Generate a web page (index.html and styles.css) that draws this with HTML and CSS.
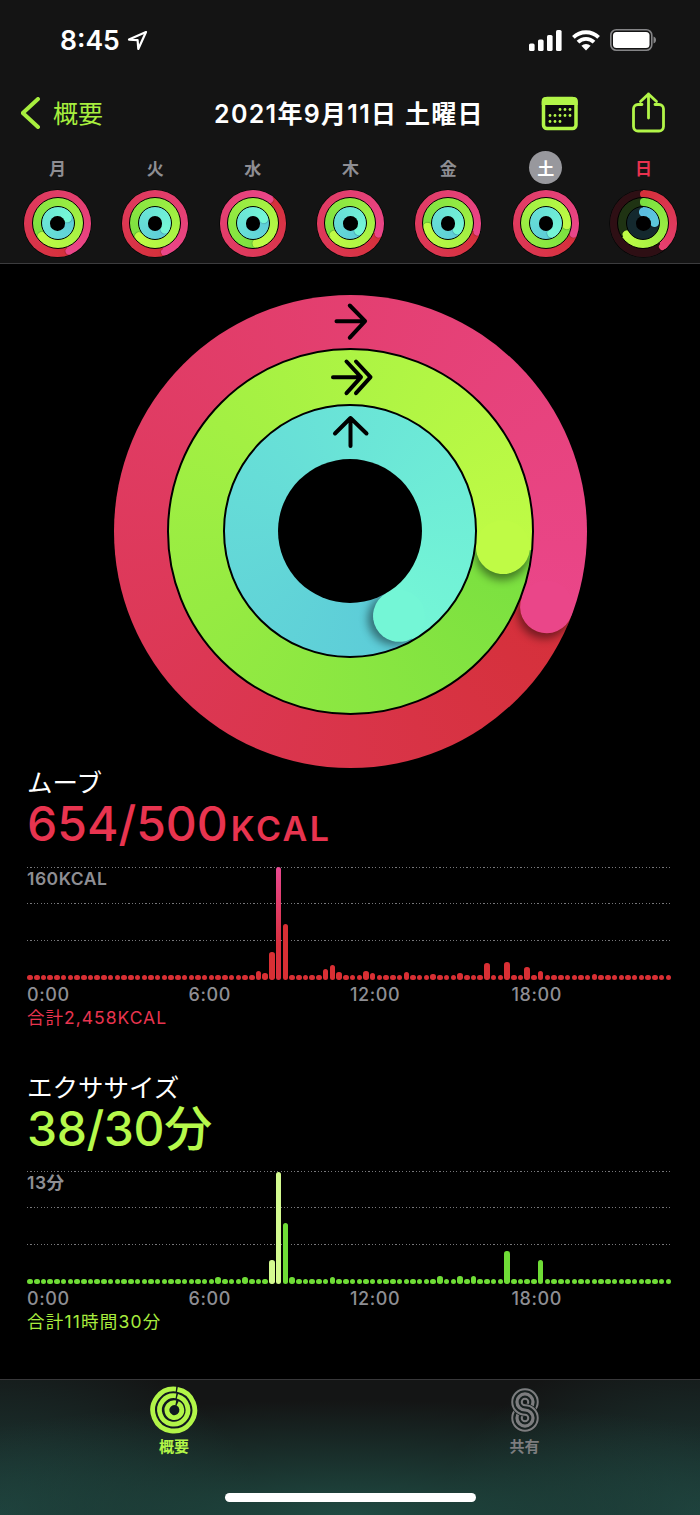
FILE: index.html
```html
<!DOCTYPE html>
<html lang="ja">
<head>
<meta charset="utf-8">
<title>アクティビティ</title>
<link rel="stylesheet" href="styles.css">
</head>
<body>
<div class="page">
  <header class="top">
    <div class="status">
      <div class="clock"><span>8:45</span>
        <svg class="loc" viewBox="126 30 21 21"><path d="M145 32 128 39.6l8.6.6.7 8.8z"/></svg>
      </div>
      <div class="sys">
        <svg class="signal" width="33" height="21" viewBox="0 0 33 21"><rect x="0" y="13.5" width="5.6" height="7.5" rx="1.6"/><rect x="9" y="9.5" width="5.6" height="11.5" rx="1.6"/><rect x="18" y="5" width="5.6" height="16" rx="1.6"/><rect x="27" y="0" width="5.6" height="21" rx="1.6"/></svg>
        <svg class="wifi" width="28" height="21" viewBox="0 0 28 21"><path d="M1.4 7.4a18 18 0 0 1 25.2 0M6 12.200a11.200 11.200 0 0 1 16 0"/><path class="wedge" d="M14 20.500 9.400 15.800a6.500 6.500 0 0 1 9.200 0z"/></svg>
        <svg class="batt" width="46" height="22" viewBox="0 0 46 22"><rect class="shell" x=".8" y=".8" width="41" height="20.4" rx="5.5"/><rect x="3" y="3" width="36.500" height="16" rx="3.5"/><path class="nub" d="M43.500 7.500c1.500.4 2.500 1.800 2.500 3.500s-1 3.100-2.500 3.500z"/></svg>
      </div>
    </div>
    <nav class="nav">
      <a class="back">
        <svg class="chev" width="19" height="32" viewBox="0 0 19 32"><path d="M17 2 1.800 16 17 30"/></svg>
        <span>概要</span>
      </a>
      <h1 class="title">2021年9月11日 土曜日</h1>
      <svg class="cal" width="38" height="35" viewBox="541 96 38 35">
        <rect class="cal-body" x="543.500" y="98.500" width="32.500" height="30" rx="3.500"/>
        <path class="cal-band" d="M541.700 105v-4a4 4 0 0 1 4-4h28a4 4 0 0 1 4 4v4z"/>
        <g class="cal-dots"><circle cx="560" cy="109.500" r="1.400"/><circle cx="565" cy="109.500" r="1.400"/><circle cx="570" cy="109.500" r="1.400"/><circle cx="550" cy="115.500" r="1.400"/><circle cx="555" cy="115.500" r="1.400"/><circle cx="560" cy="115.500" r="1.400"/><circle cx="565" cy="115.500" r="1.400"/><circle cx="570" cy="115.500" r="1.400"/><circle cx="550" cy="121.500" r="1.400"/><circle cx="555" cy="121.500" r="1.400"/><circle cx="560" cy="121.500" r="1.400"/></g>
      </svg>
      <svg class="share" width="34" height="42" viewBox="632 92 34 42"><path d="M642 104.500h-4a4.500 4.500 0 0 0-4.500 4.500v17.500a4.500 4.500 0 0 0 4.500 4.500h21a4.500 4.500 0 0 0 4.500-4.500V109a4.500 4.500 0 0 0-4.500-4.500h-4M648.500 118V94M640.500 101.500l8-7.500 8 7.500"/></svg>
    </nav>
    <ul class="days">
      <li class="day"><span class="lbl">月</span>
        <div class="ring mini move" style="--a:158deg"><i class="cap"></i><div class="ring ex" style="--a:231deg"><i class="cap"></i><div class="ring st" style="--a:61deg"><i class="cap"></i><div class="hole"></div></div></div></div></li>
      <li class="day"><span class="lbl">火</span>
        <div class="ring mini move" style="--a:163deg"><i class="cap"></i><div class="ring ex" style="--a:230deg"><i class="cap"></i><div class="ring st" style="--a:120deg"><i class="cap"></i><div class="hole"></div></div></div></div></li>
      <li class="day"><span class="lbl">水</span>
        <div class="ring mini move" style="--a:36deg"><i class="cap"></i><div class="ring ex" style="--a:170deg"><i class="cap"></i><div class="ring st" style="--a:65deg"><i class="cap"></i><div class="hole"></div></div></div></div></li>
      <li class="day"><span class="lbl">木</span>
        <div class="ring mini move" style="--a:111deg"><i class="cap"></i><div class="ring ex" style="--a:235deg"><i class="cap"></i><div class="ring st" style="--a:130deg"><i class="cap"></i><div class="hole"></div></div></div></div></li>
      <li class="day"><span class="lbl">金</span>
        <div class="ring mini move" style="--a:107deg"><i class="cap"></i><div class="ring ex" style="--a:259deg"><i class="cap"></i><div class="ring st" style="--a:125deg"><i class="cap"></i><div class="hole"></div></div></div></div></li>
      <li class="day"><span class="lbl sel">土</span>
        <div class="ring mini move" style="--a:111deg"><i class="cap"></i><div class="ring ex" style="--a:96deg"><i class="cap"></i><div class="ring st" style="--a:150deg"><i class="cap"></i><div class="hole"></div></div></div></div></li>
      <li class="day"><span class="lbl sun">日</span>
        <div class="ring mini move part" style="--a:141deg"><i class="cap"></i><i class="cap start"></i><div class="ring ex part" style="--a:236deg"><i class="cap"></i><i class="cap start"></i><div class="ring st part" style="--a:85deg"><i class="cap"></i><i class="cap start"></i><div class="hole"></div></div></div></div></li>
    </ul>
  </header>

  <main class="main">
    <div class="hero">
      <div class="ring big move" style="--a:111deg"><i class="cap"></i>
        <div class="ring ex" style="--a:96deg"><i class="cap"></i>
          <div class="ring st" style="--a:150deg"><i class="cap"></i><div class="hole"></div></div>
        </div>
      </div>
      <svg class="arrows" viewBox="113.500 294.500 473 473">
        <path d="M336 320.700h28M349.300 305l15.300 15.700-15.300 16.500"/>
        <path d="M332.500 376.700h25M346 361l14.500 15.700L346 392.700M355.500 361l14.500 15.700-14.500 16"/>
        <path d="M350 445.500v-28M334.500 433l15.500-15.500L366 433"/>
      </svg>
    </div>

    <section class="metric red">
      <h2 class="m-name">ムーブ</h2>
      <p class="m-val">654/500<small>KCAL</small></p>
      <div class="chart">
        <div class="grid"><hr><hr><hr></div>
        <span class="scale">160KCAL</span>
        <div class="bars">
          <i></i><i></i><i></i><i></i><i></i><i></i><i></i><i></i><i></i><i></i><i></i><i></i><i></i><i></i><i></i><i></i><i></i><i></i><i></i><i></i><i></i><i></i><i></i><i></i><i></i><i></i><i></i><i></i><i></i><i></i><i></i><i></i><i></i><i></i>
          <i style="height:9.5px"></i><i style="height:7px"></i><i style="height:28px"></i><i class="peak" style="height:113px"></i><i style="height:56.5px"></i>
          <i></i><i></i><i></i><i></i><i></i>
          <i style="height:11.5px"></i><i style="height:15.5px"></i><i style="height:8.5px"></i>
          <i></i><i></i><i></i>
          <i style="height:9px"></i><i style="height:7px"></i>
          <i></i><i></i><i></i><i></i>
          <i style="height:8px"></i>
          <i></i><i></i><i></i>
          <i style="height:6.5px"></i>
          <i></i><i></i><i></i>
          <i style="height:7px"></i>
          <i></i><i></i><i></i>
          <i style="height:17.5px"></i>
          <i></i><i></i>
          <i style="height:18px"></i>
          <i></i><i></i>
          <i style="height:13.5px"></i>
          <i></i>
          <i style="height:9.5px"></i>
          <i></i><i></i><i></i><i></i><i></i><i></i><i></i>
          <i style="height:6px"></i>
          <i></i><i></i><i></i><i></i><i></i><i></i><i></i><i></i><i></i><i></i><i></i>
        </div>
      </div>
      <div class="axis"><span>0:00</span><span>6:00</span><span>12:00</span><span>18:00</span></div>
      <p class="total">合計2,458KCAL</p>
    </section>

    <section class="metric green">
      <h2 class="m-name">エクササイズ</h2>
      <p class="m-val">38/30分</p>
      <div class="chart">
        <div class="grid"><hr><hr><hr></div>
        <span class="scale">13分</span>
        <div class="bars">
          <i></i><i></i><i></i><i></i><i></i><i></i><i></i><i></i><i></i><i></i><i></i><i></i><i></i><i></i><i></i><i></i><i></i><i></i><i></i><i></i><i></i><i></i><i></i><i></i><i></i><i></i><i></i><i></i>
          <i style="height:7.5px"></i>
          <i></i><i></i><i></i>
          <i style="height:7.5px"></i>
          <i></i><i></i><i></i>
          <i class="pale" style="height:24.5px"></i><i class="pale" style="height:112.5px"></i><i style="height:61px"></i><i style="height:7.5px"></i>
          <i></i><i></i><i></i><i></i><i></i>
          <i style="height:7.5px"></i>
          <i></i><i></i><i></i><i></i><i></i><i></i><i></i><i></i><i></i><i></i><i></i><i></i><i></i><i></i><i></i>
          <i style="height:8px"></i>
          <i></i><i></i>
          <i style="height:8px"></i>
          <i></i>
          <i style="height:8px"></i>
          <i></i><i></i><i></i><i></i>
          <i style="height:33px"></i>
          <i></i><i></i><i></i><i></i>
          <i style="height:24.5px"></i>
          <i></i><i></i><i></i><i></i><i></i><i></i><i></i><i></i><i></i><i></i><i></i><i></i><i></i><i></i><i></i><i></i><i></i><i></i><i></i>
        </div>
      </div>
      <div class="axis"><span>0:00</span><span>6:00</span><span>12:00</span><span>18:00</span></div>
      <p class="total">合計11時間30分</p>
    </section>
  </main>

  <footer class="tabs">
    <div class="tab on">
      <svg width="48" height="48" viewBox="0 0 48 48" class="tab-ic">
        <circle class="disc" cx="24" cy="24" r="23.5"/>
        <path d="M27.400 3.300A21 21 0 1 1 26 3.100"/>
        <path d="M27.400 10.200A14.200 14.200 0 1 1 26 9.900"/>
        <path d="M27.600 17.400A7.450 7.450 0 1 1 25.800 16.800"/>
      </svg>
      <span>概要</span>
    </div>
    <div class="tab">
      <svg width="28" height="44" viewBox="0 0 27.6 43.4" class="tab-ic share-ic">
        <defs>
          <path id="c1" d="M13.800 21.700a7.900 7.900 0 1 1 0-15.800 7.900 7.900 0 0 1 0 15.800z"/>
          <path id="c2" d="M13.800 21.700a7.900 7.900 0 1 1 0 15.800 7.900 7.900 0 0 1 0-15.800z"/>
          <path id="s" d="M21.700 13.800a7.900 7.900 0 0 0-15.800 0 7.900 7.900 0 0 0 7.900 7.900 7.900 7.900 0 0 1 7.900 7.900 7.900 7.900 0 0 1-15.800 0"/>
          <g id="band"><use href="#c1"/><use href="#c2"/></g>
        </defs>
        <g class="s1"><use href="#band"/></g><g class="s2"><use href="#band"/></g><g class="s3"><use href="#band"/></g>
        <g class="s0"><use href="#s"/></g><g class="s1"><use href="#s"/></g><g class="s2"><use href="#s"/></g><g class="s3"><use href="#s"/></g>
      </svg>
      <span>共有</span>
    </div>
    <div class="home"></div>
  </footer>
</div>
</body>
</html>
```

FILE: styles.css
```css
* { box-sizing: border-box; margin: 0; padding: 0; }
html, body { background: #000; }
body { width: 700px; height: 1515px; overflow: hidden; font-family: Inter, "Noto Sans CJK JP", sans-serif; color: #fff; }
.page { width: 700px; height: 1515px; display: flex; flex-direction: column; }

/* Header */
.top { height: 264px; background: #141414; border-bottom: 1px solid #3c3c3e; }
.status { height: 80px; display: flex; align-items: center; justify-content: space-between; padding: 0 44px 0 60px; }
.clock { display: flex; align-items: center; gap: 7px; font-size: 26.5px; font-weight: 600; }
.loc { width: 21px; height: 21px; fill: none; stroke: #fff; stroke-width: 2.2; stroke-linejoin: round; }
.sys { display: flex; align-items: center; gap: 10px; }
.signal { fill: #fff; }
.wifi { fill: none; stroke: #fff; stroke-width: 3.8; }
.wifi .wedge { fill: #fff; stroke: none; }
.batt { fill: #fff; }
.batt .shell { fill: none; stroke: #858587; stroke-width: 1.6; }
.batt .nub { fill: #858587; }

.nav { height: 66px; display: flex; align-items: center; padding-left: 21px; }
.back { display: flex; align-items: center; gap: 13px; width: 194px; color: #a7ee3e; font-size: 25px; }
.back span { margin-top: -3px; }
.chev { fill: none; stroke: #a7ee3e; stroke-width: 4; stroke-linecap: round; stroke-linejoin: round; }
.title { font-size: 25px; font-weight: 600; letter-spacing: 1.3px; white-space: nowrap; width: 326px; margin-top: -3px; margin-left: -1px; margin-right: 1px; }
.cal { margin-right: 53px; }
.cal-body { fill: #0c0c0c; stroke: #b2f548; stroke-width: 3.5; }
.cal-band { fill: #b2f548; }
.cal-dots { fill: #b2f548; }
.share { fill: none; stroke: #b2f548; stroke-width: 2.8; stroke-linecap: round; stroke-linejoin: round; }

.days { list-style: none; display: grid; grid-template-columns: repeat(7, 97.67px); padding: 4.5px 0 0 8.7px; }
.day { display: flex; flex-direction: column; align-items: center; gap: 6.5px; }
.lbl { width: 33px; height: 33px; display: flex; align-items: center; justify-content: center; font-size: 17px; font-weight: 700; color: #8e8e93; }
.lbl.sel { border-radius: 50%; background: #98989d; color: #fff; }
.lbl.sun { color: #e8324f; }

/* Activity rings */
.ring { position: relative; display: flex; align-items: center; justify-content: center; overflow: hidden; border-radius: 50%; background: conic-gradient(from var(--a), var(--c1), var(--c2)); }
.ring > .ring { border-style: solid; border-color: #000; }
.move { --c1: #d5303a; --c2: #ea4689; --tr: #2e0f14; }
.ex { --c1: #7ae040; --c2: #bffb45; --tr: #1f3313; }
.st { --c1: #5ccbd8; --c2: #74f6d6; --tr: #14292e; }
.move.part { --c2: #e53f6e; }
.st.part { --c1: #5abde0; --c2: #5cc8dc; }
.part { background: conic-gradient(var(--c1) 0, var(--c2) var(--a), var(--tr) var(--a)); }
.cap { position: absolute; left: 50%; top: 50%; width: var(--w); height: var(--w); margin: calc(var(--w) / -2); border-radius: 50%; background: var(--c2); transform: rotate(var(--a)) translateY(calc(var(--r) * -1)); }
.cap::before { content: ""; position: absolute; inset: 0; border-radius: 50%; box-shadow: var(--sh); clip-path: inset(-30px -30px -30px 50%); }
.cap.start { background: var(--c1); transform: translateY(calc(var(--r) * -1)); }
.cap.start::before { display: none; }
.hole { position: relative; border-radius: 50%; background: #000; }

.big { width: 473px; height: 473px; --w: 53px; --r: 210px; --sh: 6px 0 9px rgba(0, 0, 0, .45); }
.big .ex { width: 367px; height: 367px; border-width: 2.7px; --w: 54px; --r: 153.8px; }
.big .st { width: 253.4px; height: 253.4px; border-width: 2.7px; --w: 52px; --r: 98px; }
.big .hole { width: 144px; height: 144px; }

.mini { width: 66.5px; height: 66.5px; --w: 7.25px; --r: 29.6px; --sh: .6px 0 1px rgba(0, 0, 0, .25); box-shadow: 0 0 0 .6px #000; }
.mini .ex { width: 52px; height: 52px; border-width: 1.2px; --w: 7.8px; --r: 20.9px; }
.mini .st { width: 34px; height: 34px; border-width: 1.2px; --w: 8.5px; --r: 11.55px; }
.mini .hole { width: 14.6px; height: 14.6px; }

/* Main */
.main { flex: 1; }
.hero { position: relative; display: flex; justify-content: center; padding-top: 30.5px; }
.arrows { position: absolute; left: 113.5px; top: 30.5px; width: 473px; height: 473px; fill: none; stroke: #000; stroke-width: 4; stroke-linecap: round; stroke-linejoin: round; }

.metric { padding: 0 27px; }
.red { --tone: #e8344f; --bar: #d92f34; }
.green { --tone: #b6f94b; --bar: #6fdc36; margin-top: 44px; }
.m-name { font-size: 25.5px; font-weight: 400; line-height: 30px; }
.m-val { color: var(--tone); font-size: 48px; font-weight: 500; line-height: 50px; margin-top: 1px; white-space: nowrap; }
.m-val small { font-size: 34px; font-weight: 600; line-height: 1; letter-spacing: 2.5px; margin-left: 3px; }
.red .m-val { margin-bottom: 18px; }
.green .m-val { margin-bottom: 17px; letter-spacing: -.4px; }

.chart { position: relative; height: 113.5px; width: 646px; }
.grid { display: flex; flex-direction: column; gap: 35.65px; }
.grid hr { height: 1px; border: 0; background: repeating-linear-gradient(to right, #77777a 0 1.2px, transparent 1.2px 3.38px); }
.scale { position: absolute; left: 0; top: 2px; font-size: 17.5px; letter-spacing: .5px; line-height: 20px; font-weight: 600; color: #8e8e93; }
.bars { position: absolute; left: .3px; right: .5px; bottom: 0; display: flex; justify-content: space-between; align-items: flex-end; }
.bars i { display: block; width: 5.5px; height: 5.5px; border-radius: 2.75px; background: var(--bar); }
.bars .peak { background: linear-gradient(#e84a92, #d92f3c 70%); }
.bars .pale { background: #d4fb90; }

.axis { display: grid; grid-template-columns: repeat(4, 161.5px); margin-top: 3.5px; font-size: 18px; letter-spacing: .6px; line-height: 22px; font-weight: 500; color: #8e8e93; }
.total { color: var(--tone); font-size: 17.5px; letter-spacing: 1px; line-height: 22px; margin-top: 1px; }
.green .total { color: #a8ec3e; letter-spacing: 1.2px; }

/* Tab bar */
.tabs { position: relative; height: 136px; border-top: 1px solid #38383a; display: flex; padding-top: 6px;
  background:
    radial-gradient(ellipse 560px 115px at 50% 100%, #1f4a42, rgba(31, 74, 66, 0) 100%),
    radial-gradient(ellipse 260px 170px at 0 100%, #1e3e3a, rgba(30, 62, 58, 0) 100%),
    radial-gradient(ellipse 260px 170px at 100% 100%, #1e3e3a, rgba(30, 62, 58, 0) 100%),
    #141515; }
.tab { position: absolute; top: 6px; width: 60px; display: flex; flex-direction: column; align-items: center; font-size: 15px; font-weight: 700; line-height: 20px; color: #7d7d7f; }
.tab:nth-child(1) { left: 144px; }
.tab:nth-child(2) { left: 494.5px; }
.tab.on { color: #b2f548; }
.tab-ic { display: block; height: 48px; margin-bottom: 3px; fill: none; }
.tab.on .tab-ic { stroke: #b2f548; stroke-width: 4.8; }
.tab.on .disc { stroke: none; fill: #101820; }
.share-ic { padding: 2px 0; }
.s0 { stroke: #17201f; stroke-width: 13; }
.s1 { stroke: #7d7d7f; stroke-width: 11.3; }
.s2 { stroke: #17201f; stroke-width: 7.4; }
.s3 { stroke: #7d7d7f; stroke-width: 3.2; }
.home { position: absolute; left: 225px; bottom: 13px; width: 251px; height: 9px; border-radius: 5px; background: #fff; }
```
